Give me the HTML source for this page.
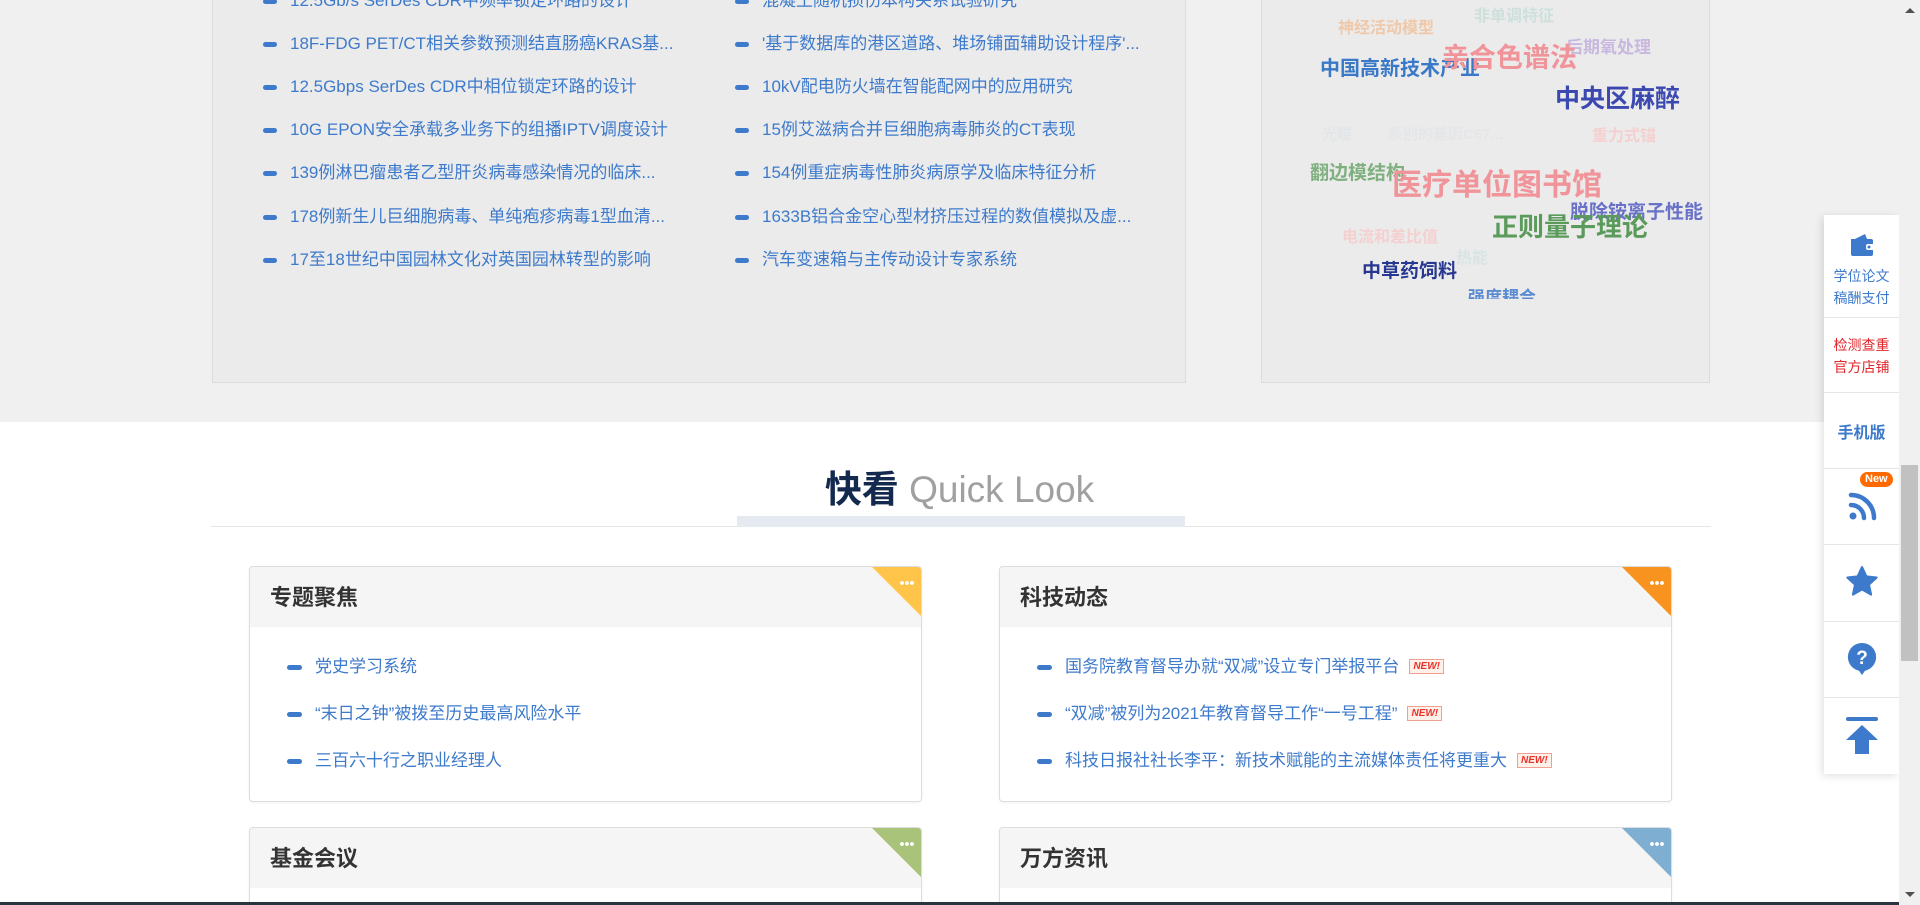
<!DOCTYPE html>
<html><head><meta charset="utf-8"><style>
*{margin:0;padding:0;box-sizing:border-box}
html,body{width:1920px;height:905px;overflow:hidden}
body{background:#fff;font-family:"Liberation Sans","Noto Sans CJK SC",sans-serif}
#w{position:relative;width:1920px;height:905px;overflow:hidden}
.top{position:absolute;left:0;top:0;width:1920px;height:422px;background:#f0f0f0}
.panel{position:absolute;top:-2px;height:385px;background:#ebebeb;border:1px solid #dcdcdc}
.li{position:absolute;font-size:17px;color:#3d7acb;white-space:nowrap;line-height:20px}
.li:before{content:"";position:absolute;left:-27px;top:8px;width:14px;height:5px;border-radius:3px;background:#3d7acb}
.cw{position:absolute;white-space:nowrap;font-weight:bold;line-height:1}
.side{position:absolute;left:1824px;top:215px;width:75px;height:559px;background:#fff;box-shadow:-2px 2px 8px rgba(0,0,0,.12)}
.sec{position:absolute;left:0;width:75px;border-bottom:1px solid #e6e6e6;text-align:center}
.card{position:absolute;width:673px;border:1px solid #ddd;border-radius:4px;background:#fff;overflow:hidden;box-shadow:0 1px 3px rgba(0,0,0,.05)}
.ch{height:60px;background:#f5f5f5;font-size:22px;font-weight:bold;color:#333;padding-left:20px;line-height:62px;position:relative}
.tri{position:absolute;right:0;top:0;width:0;height:0;border-left:49px solid transparent}
.dots{position:absolute;right:7px;top:14px;width:14px;height:4px;background:radial-gradient(circle at 2px 2px,#fff 1.8px,transparent 2px) 0 0/5px 4px repeat-x}
.ci{position:absolute;font-size:17px;color:#3d7acb;white-space:nowrap;line-height:20px}
.ci:before{content:"";position:absolute;left:-28px;top:8px;width:15px;height:5px;border-radius:3px;background:#3d7acb}
.new{display:inline-block;margin-left:10px;font-size:10px;font-weight:bold;color:#e8342a;border:1px solid #f0a090;background:#fff0ea;padding:0 3px;line-height:13px;vertical-align:3px;font-style:italic}
</style></head><body><div id="w">
<div class="top">
 <div class="panel" style="left:212px;width:974px"></div>
 <div class="panel" style="left:1261px;width:449px;overflow:hidden">
  <div style="position:absolute;left:0;top:0;width:449px;height:300px;overflow:hidden">
   <span class="cw" style="left:76px;top:22px;font-size:16px;color:#f0c8a8">神经活动模型</span>
   <span class="cw" style="left:212px;top:10px;font-size:16px;color:#cde0dc">非单调特征</span>
   <span class="cw" style="left:304px;top:40px;font-size:17px;color:#c8b8e0">后期氧处理</span>
   <span class="cw" style="left:58px;top:60px;font-size:20px;color:#3a78c8">中国高新技术产业</span>
   <span class="cw" style="left:180px;top:46px;font-size:27px;color:#f0949a">亲合色谱法</span>
   <span class="cw" style="left:293px;top:88px;font-size:25px;color:#3a48b0">中央区麻醉</span>
   <span class="cw" style="left:60px;top:128px;font-size:15px;color:#e2e6e8">光瞳</span>
   <span class="cw" style="left:126px;top:128px;font-size:15px;color:#e4e6e8">系别的基因C67...</span>
   <span class="cw" style="left:330px;top:130px;font-size:16px;color:#f5d0d0">重力式锚</span>
   <span class="cw" style="left:48px;top:165px;font-size:19px;color:#80b080">翻边模结构</span>
   <span class="cw" style="left:130px;top:172px;font-size:30px;color:#f0949a">医疗单位图书馆</span>
   <span class="cw" style="left:308px;top:204px;font-size:19px;color:#6a72c8">脱除铵离子性能</span>
   <span class="cw" style="left:230px;top:215px;font-size:26px;color:#5a9a5a">正则量子理论</span>
   <span class="cw" style="left:80px;top:231px;font-size:16px;color:#f5d0d0">电流和差比值</span>
   <span class="cw" style="left:194px;top:252px;font-size:16px;color:#d8e4e4">热能</span>
   <span class="cw" style="left:100px;top:263px;font-size:19px;color:#283890">中草药饲料</span>
   <span class="cw" style="left:206px;top:290px;font-size:17px;color:#5a8ad0">强度耦合</span>
  </div>
 </div>
 <div class="li" style="left:290px;top:-9px">12.5Gb/s SerDes CDR中频率锁定环路的设计</div>
 <div class="li" style="left:290px;top:34px">18F-FDG PET/CT相关参数预测结直肠癌KRAS基...</div>
 <div class="li" style="left:290px;top:77px">12.5Gbps SerDes CDR中相位锁定环路的设计</div>
 <div class="li" style="left:290px;top:120px">10G EPON安全承载多业务下的组播IPTV调度设计</div>
 <div class="li" style="left:290px;top:163px">139例淋巴瘤患者乙型肝炎病毒感染情况的临床...</div>
 <div class="li" style="left:290px;top:207px">178例新生儿巨细胞病毒、单纯疱疹病毒1型血清...</div>
 <div class="li" style="left:290px;top:250px">17至18世纪中国园林文化对英国园林转型的影响</div>
 <div class="li" style="left:762px;top:-9px">混凝土随机损伤本构关系试验研究</div>
 <div class="li" style="left:762px;top:34px">'基于数据库的港区道路、堆场铺面辅助设计程序'...</div>
 <div class="li" style="left:762px;top:77px">10kV配电防火墙在智能配网中的应用研究</div>
 <div class="li" style="left:762px;top:120px">15例艾滋病合并巨细胞病毒肺炎的CT表现</div>
 <div class="li" style="left:762px;top:163px">154例重症病毒性肺炎病原学及临床特征分析</div>
 <div class="li" style="left:762px;top:207px">1633B铝合金空心型材挤压过程的数值模拟及虚...</div>
 <div class="li" style="left:762px;top:250px">汽车变速箱与主传动设计专家系统</div>
</div>

<div style="position:absolute;left:0;top:468px;width:1920px;text-align:center;padding-right:1px;font-size:37px;line-height:44px"><b style="color:#132a4e">快看</b> <span style="color:#a0a0a0;font-weight:300">Quick Look</span></div>
<div style="position:absolute;left:211px;top:526px;width:1500px;height:1px;background:#e6e6e6"></div>
<div style="position:absolute;left:737px;top:516px;width:448px;height:11px;background:#e5eaf1"></div>

<div class="card" style="left:249px;top:566px;height:236px">
 <div class="ch">专题聚焦<div class="tri" style="border-top:49px solid #ffc54a"></div><div class="dots"></div></div>
 <div class="ci" style="left:65px;top:90px">党史学习系统</div>
 <div class="ci" style="left:65px;top:137px">“末日之钟”被拨至历史最高风险水平</div>
 <div class="ci" style="left:65px;top:184px">三百六十行之职业经理人</div>
</div>
<div class="card" style="left:999px;top:566px;height:236px">
 <div class="ch">科技动态<div class="tri" style="border-top:49px solid #f7931e"></div><div class="dots"></div></div>
 <div class="ci" style="left:65px;top:90px">国务院教育督导办就“双减”设立专门举报平台<span class="new">NEW!</span></div>
 <div class="ci" style="left:65px;top:137px">“双减”被列为2021年教育督导工作“一号工程”<span class="new">NEW!</span></div>
 <div class="ci" style="left:65px;top:184px">科技日报社社长李平：新技术赋能的主流媒体责任将更重大<span class="new">NEW!</span></div>
</div>
<div class="card" style="left:249px;top:827px;height:120px">
 <div class="ch">基金会议<div class="tri" style="border-top:49px solid #a9c47a"></div><div class="dots"></div></div>
</div>
<div class="card" style="left:999px;top:827px;height:120px">
 <div class="ch">万方资讯<div class="tri" style="border-top:49px solid #7eaed2"></div><div class="dots"></div></div>
</div>

<div class="side">
 <div class="sec" style="top:0;height:103px">
  <svg width="26" height="24" viewBox="0 0 26 24" style="position:absolute;left:25px;top:18px"><path d="M2 6h20a2 2 0 0 1 2 2v13a2 2 0 0 1-2 2H4a2 2 0 0 1-2-2z" fill="#3d7acb"/><path d="M6 6l10-5 2 5z" fill="#3d7acb"/><rect x="17" y="11" width="9" height="6" rx="2" fill="#fff"/><circle cx="20" cy="14" r="1.5" fill="#3d7acb"/></svg>
  <div style="position:absolute;top:50px;width:75px;font-size:14px;line-height:22px;color:#3d7acb">学位论文<br>稿酬支付</div>
 </div>
 <div class="sec" style="top:103px;height:75px"><div style="margin-top:16px;font-size:14px;line-height:22px;color:#e0262a">检测查重<br>官方店铺</div></div>
 <div class="sec" style="top:178px;height:76px"><div style="margin-top:26px;font-size:16px;font-weight:bold;color:#3d7acb">手机版</div></div>
 <div class="sec" style="top:254px;height:76px">
  <div style="position:absolute;left:36px;top:3px;background:#ff6a00;color:#fff;font-size:11px;font-weight:bold;border-radius:8px;padding:0 5px;line-height:15px">New</div>
  <svg width="30" height="30" viewBox="0 0 30 30" style="position:absolute;left:24px;top:22px"><circle cx="5" cy="25" r="3.5" fill="#3d7acb"/><path d="M3 14a13 13 0 0 1 13 13" stroke="#3d7acb" stroke-width="4.5" fill="none" stroke-linecap="round"/><path d="M3 4a23 23 0 0 1 23 23" stroke="#3d7acb" stroke-width="4.5" fill="none" stroke-linecap="round"/></svg>
 </div>
 <div class="sec" style="top:330px;height:77px"><svg width="34" height="34" viewBox="0 0 24 24" style="position:absolute;left:21px;top:20px"><path d="M12 1.5l3.1 6.6 7.2.8-5.4 4.9 1.5 7.1L12 17.3l-6.4 3.6 1.5-7.1L1.7 8.9l7.2-.8z" fill="#3d7acb" stroke="#3d7acb" stroke-linejoin="round" stroke-width="1.5"/></svg></div>
 <div class="sec" style="top:407px;height:76px"><svg width="30" height="34" viewBox="0 0 30 34" style="position:absolute;left:23px;top:20px"><path d="M15 1a14 14 0 0 1 3 27.7L15 33l-3-4.3A14 14 0 0 1 15 1z" fill="#3d7acb"/><text x="15" y="22" text-anchor="middle" font-size="19" font-weight="bold" fill="#fff" font-family="Liberation Sans">?</text></svg></div>
 <div class="sec" style="top:483px;height:76px;border:0"><svg width="34" height="40" viewBox="0 0 34 40" style="position:absolute;left:21px;top:18px"><rect x="1" y="1" width="32" height="4" rx="2" fill="#3d7acb"/><path d="M17 9L33 24H24V38H10V24H1z" fill="#3d7acb"/></svg></div>
</div>

<div style="position:absolute;left:1899px;top:0;width:21px;height:905px;background:#f0f0f0"></div>
<div style="position:absolute;left:1901px;top:465px;width:17px;height:196px;background:#c1c1c1"></div>
<div style="position:absolute;left:1905px;top:8px;width:0;height:0;border-left:5px solid transparent;border-right:5px solid transparent;border-bottom:5px solid #505050"></div>
<div style="position:absolute;left:1905px;top:892px;width:0;height:0;border-left:5px solid transparent;border-right:5px solid transparent;border-top:5px solid #505050"></div>
<div style="position:absolute;left:0;top:902px;width:1899px;height:3px;background:#2a3440"></div>
</div></body></html>
